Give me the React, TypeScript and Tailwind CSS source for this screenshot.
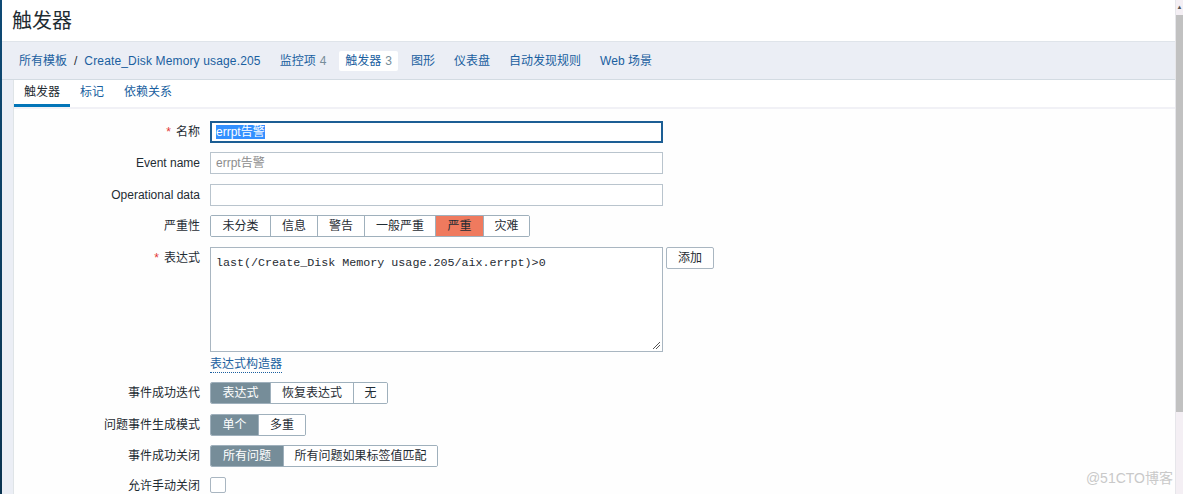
import React from 'react';

const font = { fontFamily: '"Liberation Sans", "Noto Sans CJK SC", sans-serif' };

const navItems = [
  { label: '监控项', count: '4' },
  { label: '触发器', count: '3', active: true },
  { label: '图形' },
  { label: '仪表盘' },
  { label: '自动发现规则' },
  { label: 'Web 场景' },
];

const severities = ['未分类', '信息', '警告', '一般严重', '严重', '灾难'];

type SegProps = { items: string[]; active: number; activeClass: string; widths: string[] };

const Segmented = ({ items, active, activeClass, widths }: SegProps) => (
  <div className="flex h-[22px] rounded-[2px] border border-[#9fb0bc] overflow-hidden">
    {items.map((it, i) => (
      <div
        key={it}
        className={`flex items-center justify-center ${widths[i]} ${i > 0 ? 'border-l border-[#9fb0bc]' : ''} ${
          i === active ? activeClass : 'bg-white text-[#1f2c33]'
        }`}
      >
        {it}
      </div>
    ))}
  </div>
);

type RowProps = { label: string; required?: boolean; children: React.ReactNode; className?: string; leading?: string };

const Row = ({ label, required, children, className = '', leading = 'leading-[22px]' }: RowProps) => (
  <div className={`flex ${className}`}>
    <div className={`w-[186px] text-right text-[#1f2c33] ${leading} shrink-0`}>
      {required && <span className="text-[#e33734] mr-[5px]">*</span>}
      {label}
    </div>
    <div className="ml-[10px]">{children}</div>
  </div>
);

export default function App() {
  return (
    <div className="relative w-[1183px] h-[494px] overflow-hidden flex bg-white text-[12px]" style={font}>
      <div className="w-[2px] bg-gradient-to-b from-[#0e4a75] to-[#0a3350] shrink-0" />
      <div className="flex-1 flex flex-col bg-[#ebeef5] border-r border-[#e6e6ea]">
        <div className="h-[42px] shrink-0 bg-white flex items-center pl-[10px] text-[20px] text-[#1f2c33] border-b border-[#dfe4ea]">
          触发器
        </div>
        <div className="h-[38px] shrink-0 flex items-center pl-[17px] border-b border-[#d3dbe2]">
          <span className="text-[#1a5fa0]">所有模板</span>
          <span className="mx-[7px] text-[#1f2c33]">/</span>
          <span className="text-[#1a5fa0] tracking-[0.15px]">Create_Disk Memory usage.205</span>
          <div className="flex items-center ml-[13px]">
            {navItems.map((n) => (
              <div
                key={n.label}
                className={`h-[20px] flex items-center px-[6px] mr-[7px] ${n.active ? 'bg-white rounded-[2px]' : ''}`}
              >
                <span className="text-[#1a5fa0]">{n.label}</span>
                {n.count && <span className="ml-[4px] text-[#768d99]">{n.count}</span>}
              </div>
            ))}
          </div>
        </div>
        <div className="flex-1 ml-[11px] bg-[#fefefe] border-l border-[#dfe4e7] flex flex-col">
          <div className="h-[27px] shrink-0 flex bg-white">
            <div className="w-[56px] flex items-center justify-center text-[#1f2c33] border-b-[3px] border-[#0275b8]">
              触发器
            </div>
            <div className="px-[10px] flex items-center text-[#1a5fa0] pb-[3px]">标记</div>
            <div className="px-[10px] flex items-center text-[#1a5fa0] pb-[3px]">依赖关系</div>
          </div>
          <div className="h-[2px] shrink-0 bg-[#f1f1f6]" />
          <div className="flex flex-col pt-[12px]">
            <Row label="名称" required>
              <div className="w-[453px] h-[22px] border-[2px] border-[#1c5e94] bg-white flex items-center px-[4px]">
                <span className="bg-[#3390ff] text-white leading-[14px]">errpt告警</span>
              </div>
            </Row>
            <Row label="Event name" className="mt-[9px]">
              <div className="w-[453px] h-[22px] border border-[#b9c4cd] bg-white flex items-center px-[5px] text-[#8d8d8d]">
                errpt告警
              </div>
            </Row>
            <Row label="Operational data" className="mt-[10px]">
              <div className="w-[453px] h-[22px] border border-[#b9c4cd] bg-white" />
            </Row>
            <Row label="严重性" className="mt-[9px]">
              <Segmented
                items={severities}
                active={4}
                activeClass="bg-[#ef7a5e] text-[#1f2c33]"
                widths={['w-[59px]', 'w-[47px]', 'w-[47px]', 'w-[71px]', 'w-[48px]', 'w-[46px]']}
              />
            </Row>
            <Row label="表达式" required className="mt-[10px]">
              <div className="flex items-start gap-[3px]">
                <div className="relative w-[453px] h-[105px] border border-[#a9b6c1] bg-white px-[5px] pt-[5px]">
                  <span className="text-[11.7px] text-[#1f2c33]" style={{ fontFamily: '"Liberation Mono", monospace' }}>
                    last(/Create_Disk Memory usage.205/aix.errpt)&gt;0
                  </span>
                  <svg className="absolute right-[1px] bottom-[1px]" width="9" height="9" viewBox="0 0 9 9">
                    <path d="M8 1 L1 8 M8 4 L4 8" stroke="#555" strokeWidth="1" />
                  </svg>
                </div>
                <div className="w-[48px] h-[22px] border border-[#a9b6c1] rounded-[2px] bg-white flex items-center justify-center text-[#1f2c33]">
                  添加
                </div>
              </div>
            </Row>
            <Row label="" className="mt-[3px]">
              <span className="text-[#1a5fa0] border-b border-dotted border-[#1a5fa0] leading-[15px] inline-block">表达式构造器</span>
            </Row>
            <Row label="事件成功迭代" className="mt-[9px]">
              <Segmented
                items={['表达式', '恢复表达式', '无']}
                active={0}
                activeClass="bg-[#768d99] text-white"
                widths={['w-[59px]', 'w-[83px]', 'w-[34px]']}
              />
            </Row>
            <Row label="问题事件生成模式" className="mt-[10px]">
              <Segmented
                items={['单个', '多重']}
                active={0}
                activeClass="bg-[#768d99] text-white"
                widths={['w-[47px]', 'w-[47px]']}
              />
            </Row>
            <Row label="事件成功关闭" className="mt-[9px]">
              <Segmented
                items={['所有问题', '所有问题如果标签值匹配']}
                active={0}
                activeClass="bg-[#768d99] text-white"
                widths={['w-[72px]', 'w-[154px]']}
              />
            </Row>
            <Row label="允许手动关闭" className="mt-[10px]" leading="leading-[18px]">
              <div className="w-[16px] h-[16px] border border-[#a9b6c1] rounded-[2px] bg-white" />
            </Row>
          </div>
        </div>
      </div>
      <div className="w-[7px] shrink-0 bg-[#f4eff4] flex flex-col">
        <div className="h-[15px] flex items-center justify-center text-[6px] text-[#555]">▲</div>
        <div className="h-[397px] bg-[#c1c1c1]" />
      </div>
      <div className="absolute right-[10px] bottom-[5px] text-[14px] text-[#c9c9c9]">@51CTO博客</div>
    </div>
  );
}
